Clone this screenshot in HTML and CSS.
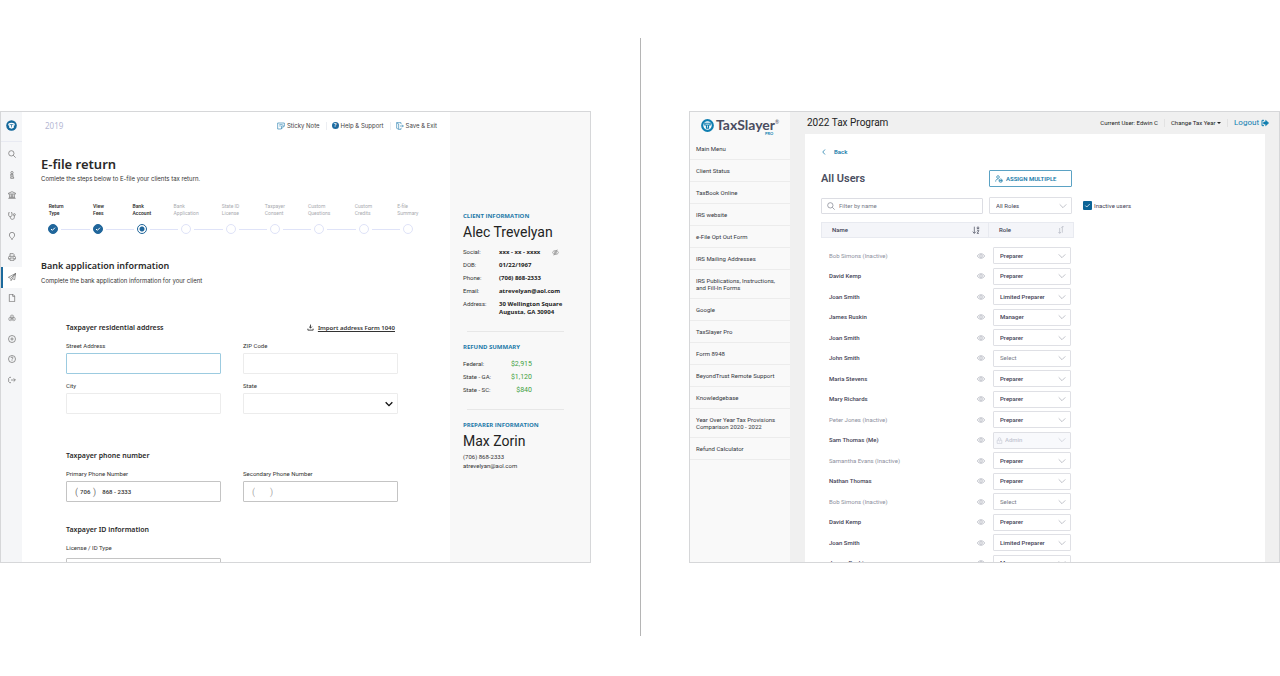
FILE: index.html
```html
<!DOCTYPE html>
<html lang="en">
<head>
<meta charset="utf-8">
<meta name="viewport" content="width=device-width, initial-scale=1">
<title>TaxSlayer screens</title>
<link rel="stylesheet" href="styles.css">
</head>
<body>
<svg class="sprite" aria-hidden="true">
  <symbol id="i-logo" viewBox="0 0 24 24"><circle cx="12" cy="12" r="11.500" fill="#14689b" stroke="none"/><path d="M5 8c4-3 10-3 14 0v4h-2v5l-5 2-5-2v-5H5z" fill="#fff" stroke="none"/><path d="M8 10h8M12 10v6" stroke="#14689b" stroke-width="1.500"/></symbol>
  <symbol id="i-brand" viewBox="0 0 24 24"><circle cx="12" cy="12" r="9.800" fill="#fff" stroke="#0f7eb0" stroke-width="4"/><path d="M6 7h12v5h-3v6H9v-6H6z" fill="#0f7eb0" stroke="none"/><path d="M8 9.500h8M12 12v4" stroke="#fff" stroke-width="1.500"/></symbol>
  <symbol id="i-search" viewBox="0 0 24 24"><circle cx="10" cy="10" r="8"/><path d="m16 16 7 7"/></symbol>
  <symbol id="i-info" viewBox="0 0 24 24"><circle cx="12" cy="5" r="3.500"/><path d="M8 10h7v9h2v3H8v-3h1v-6H8zM12 13v6"/></symbol>
  <symbol id="i-bank" viewBox="0 0 24 24"><path d="M1 7 12 2l11 5v2H1zM1 22h22M5 10v9M10 10v9M14 10v9M19 10v9M3 19h18"/></symbol>
  <symbol id="i-steth" viewBox="0 0 24 24"><path d="M5 2H2v7c0 3 2 5 5 5s5-2 5-5V2H9M7 14v2c0 8 12 8 12 0v-5"/><circle cx="19" cy="8" r="3"/></symbol>
  <symbol id="i-pin" viewBox="0 0 24 24"><path d="M12 23c-1-5-8-8-8-14a8 8 0 0 1 16 0c0 6-7 9-8 14z"/></symbol>
  <symbol id="i-print" viewBox="0 0 24 24"><path d="M6 10V2h10l2 2v6M6 18H1v-6l2-2h18l2 2v6h-5M6 15h12v7H6z"/></symbol>
  <symbol id="i-plane" viewBox="0 0 24 24"><path d="M23 1 1 13l7 3L23 1l-3 19-7-3-4 6v-6M23 1 13 17"/></symbol>
  <symbol id="i-file" viewBox="0 0 24 24"><path d="M4 1h11l5 5v17H4zM14 1v6h6"/></symbol>
  <symbol id="i-coins" viewBox="0 0 24 24"><g stroke-width="1.500"><circle cx="12" cy="8" r="5"/><circle cx="7" cy="15" r="5"/><circle cx="17" cy="15" r="5"/><path d="M12 5v6M7 13v5M17 13v5"/></g></symbol>
  <symbol id="i-plus" viewBox="0 0 24 24"><circle cx="12" cy="12" r="10.500"/><path d="M12 7v10M7 12h10"/></symbol>
  <symbol id="i-help" viewBox="0 0 24 24"><circle cx="12" cy="12" r="10.500"/><path d="M9 9c0-4 6-4 6 0 0 2-3 2-3 5M12 16v2"/></symbol>
  <symbol id="i-exit" viewBox="0 0 24 24"><path d="M9 4H5L2 7v10l3 3h4M9 12h13M17 7l5 5-5 5"/></symbol>
  <symbol id="i-note" viewBox="0 0 24 24"><path d="M22 12V3H2v18h11l9-9h-8l-1 9M7 8h10M7 12h4"/></symbol>
  <symbol id="i-save" viewBox="0 0 24 24"><path d="M15 6V2H2v17l6 3h7v-4M2 2l6 4v16M12 12h10M18 8l4 4-4 4"/></symbol>
  <symbol id="i-check" viewBox="0 0 24 24"><path d="m6 12 4 4 8-8"/></symbol>
  <symbol id="i-down" viewBox="0 0 24 24"><path d="M12 2v12M7 9l5 5 5-5M3 16v5h18v-5" stroke-width="3"/></symbol>
  <symbol id="i-chev" viewBox="0 0 24 24"><path d="m2 7 10 10L22 7"/></symbol>
  <symbol id="i-left" viewBox="0 0 24 24"><path d="M16 2 7 12l9 10"/></symbol>
  <symbol id="i-eye" viewBox="0 0 24 24"><path d="M1 12c5-9 17-9 22 0-5 9-17 9-22 0z"/><circle cx="12" cy="12" r="4"/></symbol>
  <symbol id="i-eyeoff" viewBox="0 0 24 24"><path d="M1 12c5-9 17-9 22 0-5 9-17 9-22 0zM6 22 18 2"/><circle cx="12" cy="12" r="4"/></symbol>
  <symbol id="i-users" viewBox="0 0 24 24"><circle cx="9" cy="6" r="4"/><path d="M2 20c0-6 3-8 8-8"/><circle cx="17" cy="17" r="5"/><path d="M15 15v4M19 15v4M13 17h9"/></symbol>
  <symbol id="i-az" viewBox="0 0 24 24"><path d="M7 2v20M2 17l5 5 5-5M16 10V4l2-2 2 2v6M16 7h4M15 14h6l-6 8h6"/></symbol>
  <symbol id="i-sort" viewBox="0 0 24 24"><path d="M8 6v16M4 18l4 4 4-4M16 20V2h4M16 2l-3 3"/></symbol>
  <symbol id="i-lock" viewBox="0 0 24 24"><path d="M4 11h16v11H4zM8 11V6c0-5 8-5 8 0v5M12 15v3"/></symbol>
  <symbol id="i-logout" viewBox="0 0 24 24"><path d="M9 4H3v16h6" stroke-width="3"/><path d="M8 9h6V4l9 8-9 8v-5H8z" fill="currentColor"/></symbol>
</svg>

<main class="compare">
  <section class="screen efile" aria-label="E-file return">
    <nav class="rail" aria-label="Sections">
      <a class="rail-logo" href="#" aria-label="Home"><svg class="icon-l"><use href="#i-logo"/></svg></a>
      <div class="rail-list">
        <a href="#" aria-label="Search"><svg class="icon"><use href="#i-search"/></svg></a>
        <a href="#" aria-label="Information"><svg class="icon"><use href="#i-info"/></svg></a>
        <a href="#" aria-label="Bank"><svg class="icon"><use href="#i-bank"/></svg></a>
        <a href="#" aria-label="Health"><svg class="icon"><use href="#i-steth"/></svg></a>
        <a href="#" aria-label="Location"><svg class="icon"><use href="#i-pin"/></svg></a>
        <a href="#" aria-label="Print"><svg class="icon"><use href="#i-print"/></svg></a>
        <a class="active" href="#" aria-label="E-file"><svg class="icon"><use href="#i-plane"/></svg></a>
        <a href="#" aria-label="Documents"><svg class="icon"><use href="#i-file"/></svg></a>
        <a href="#" aria-label="Payments"><svg class="icon"><use href="#i-coins"/></svg></a>
        <a href="#" aria-label="Add"><svg class="icon"><use href="#i-plus"/></svg></a>
        <a href="#" aria-label="Help"><svg class="icon"><use href="#i-help"/></svg></a>
        <a href="#" aria-label="Exit"><svg class="icon"><use href="#i-exit"/></svg></a>
      </div>
    </nav>

    <div class="efile-main">
      <header class="efile-top">
        <span class="year">2019</span>
        <div class="tools">
          <a href="#"><svg class="icon blue"><use href="#i-note"/></svg>Sticky Note</a>
          <a href="#"><span class="help-dot">?</span>Help &amp; Support</a>
          <a href="#"><svg class="icon blue"><use href="#i-save"/></svg>Save &amp; Exit</a>
        </div>
      </header>

      <h1>E-file return</h1>
      <p class="lead">Comlete the steps below to E-file your clients tax return.</p>

      <ol class="steps">
        <li class="done"><span class="label">Return<br>Type</span><span class="track"><span class="dot"><svg><use href="#i-check"/></svg></span></span></li>
        <li class="done"><span class="label">View<br>Fees</span><span class="track"><span class="dot"><svg><use href="#i-check"/></svg></span></span></li>
        <li class="current"><span class="label">Bank<br>Account</span><span class="track"><span class="dot"></span></span></li>
        <li><span class="label">Bank<br>Application</span><span class="track"><span class="dot"></span></span></li>
        <li><span class="label">State ID<br>License</span><span class="track"><span class="dot"></span></span></li>
        <li><span class="label">Taxpayer<br>Consent</span><span class="track"><span class="dot"></span></span></li>
        <li><span class="label">Custom<br>Questions</span><span class="track"><span class="dot"></span></span></li>
        <li><span class="label">Custom<br>Credits</span><span class="track"><span class="dot"></span></span></li>
        <li><span class="label">E-file<br>Summary</span><span class="track"><span class="dot"></span></span></li>
      </ol>

      <h2>Bank application information</h2>
      <p class="lead lead-2">Complete the bank application information for your client</p>

      <form class="form">
        <div class="form-head">
          <h3>Taxpayer residential address</h3>
          <a class="import" href="#"><svg class="icon"><use href="#i-down"/></svg><span>Import address Form 1040</span></a>
        </div>
        <div class="fields">
          <div class="field"><label for="street">Street Address</label><input id="street" class="focus" type="text"></div>
          <div class="field"><label for="zip">ZIP Code</label><input id="zip" type="text"></div>
          <div class="field"><label for="city">City</label><input id="city" type="text"></div>
          <div class="field"><label for="state">State</label>
            <div class="pick"><select id="state"><option></option></select><svg class="chev bold"><use href="#i-chev"/></svg></div></div>
        </div>
        <h3 class="phone-title">Taxpayer phone number</h3>
        <div class="fields strong">
          <div class="field"><label for="phone1">Primary Phone Number</label>
            <div class="phone"><span>(</span><input id="phone1" class="area" type="text" value="706"><span>)</span><input type="text" aria-label="Primary number" value="868 - 2333"></div></div>
          <div class="field"><label for="phone2">Secondary Phone Number</label>
            <div class="phone empty"><span>(</span><input id="phone2" class="area" type="text"><span>)</span><input type="text" aria-label="Secondary number"></div></div>
        </div>
        <h3 class="id-title">Taxpayer ID information</h3>
        <div class="fields strong roomy">
          <div class="field"><label for="idtype">License / ID Type</label><input id="idtype" type="text"></div>
        </div>
      </form>
    </div>

    <aside class="client">
      <h4>CLIENT INFORMATION</h4>
      <p class="person">Alec Trevelyan</p>
      <dl class="facts">
        <dt>Social:</dt><dd class="split">xxx - xx - xxxx <svg class="icon-s"><use href="#i-eyeoff"/></svg></dd>
        <dt>DOB:</dt><dd>01/22/1967</dd>
        <dt>Phone:</dt><dd>(706) 868-2333</dd>
        <dt>Email:</dt><dd>atrevelyan@aol.com</dd>
        <dt>Address:</dt><dd>30 Wellington Square<br>Augusta, GA 30904</dd>
      </dl>
      <hr>
      <h4>REFUND SUMMARY</h4>
      <dl class="facts refunds">
        <dt>Federal:</dt><dd>$2,915</dd>
        <dt>State - GA:</dt><dd>$1,120</dd>
        <dt>State - SC:</dt><dd>$840</dd>
      </dl>
      <hr>
      <h4>PREPARER INFORMATION</h4>
      <p class="person">Max Zorin</p>
      <p class="contact">(706) 868-2333<br>atrevelyan@aol.com</p>
    </aside>
  </section>

  <div class="divider"></div>

  <section class="screen admin" aria-label="Tax program users">
    <nav class="menu" aria-label="Main">
      <a class="brand" href="#"><svg><use href="#i-brand"/></svg><span class="brand-name">TaxSlayer<sup>®</sup><small>PRO</small></span></a>
      <a href="#">Main Menu</a>
      <a href="#">Client Status</a>
      <a href="#">TaxBook Online</a>
      <a href="#">IRS website</a>
      <a href="#">e-File Opt Out Form</a>
      <a href="#">IRS Mailing Addresses</a>
      <a href="#">IRS Publications, Instructions,<br>and Fill-In Forms</a>
      <a href="#">Google</a>
      <a href="#">TaxSlayer Pro</a>
      <a href="#">Form 8948</a>
      <a href="#">BeyondTrust Remote Support</a>
      <a href="#">Knowledgebase</a>
      <a href="#">Year Over Year Tax Provisions<br>Comparison 2020 - 2022</a>
      <a href="#">Refund Calculator</a>
    </nav>

    <div class="admin-main">
      <header class="admin-top">
        <h1>2022 Tax Program</h1>
        <div class="account">
          <span>Current User: Edwin C</span>
          <button type="button">Change Tax Year <i class="caret"></i></button>
          <a href="#">Logout <svg class="icon"><use href="#i-logout"/></svg></a>
        </div>
      </header>

      <div class="card">
        <a class="back" href="#"><svg><use href="#i-left"/></svg>Back</a>
        <div class="bar">
          <h2>All Users</h2>
          <button class="assign" type="button"><svg class="icon"><use href="#i-users"/></svg>ASSIGN MULTIPLE</button>
        </div>
        <div class="bar filters">
          <div class="search"><svg class="icon"><use href="#i-search"/></svg><input type="text" aria-label="Filter by name" placeholder="Filter by name"></div>
          <div class="pick"><select aria-label="Role filter"><option>All Roles</option></select><svg class="chev"><use href="#i-chev"/></svg></div>
          <label class="check"><input type="checkbox" checked><svg><use href="#i-check"/></svg><span>Inactive users</span></label>
        </div>

        <table class="users">
          <thead><tr>
            <th><span class="split">Name<svg class="icon"><use href="#i-az"/></svg></span></th>
            <th><span class="split">Role<svg class="icon pale"><use href="#i-sort"/></svg></span></th>
          </tr></thead>
          <tbody>
            <tr class="off"><td><span class="split">Bob Simons (Inactive)<svg class="icon"><use href="#i-eye"/></svg></span></td><td><div class="pick"><select aria-label="Role"><option>Preparer</option></select><svg class="chev"><use href="#i-chev"/></svg></div></td></tr>
            <tr><td><span class="split">David Kemp<svg class="icon"><use href="#i-eye"/></svg></span></td><td><div class="pick"><select aria-label="Role"><option>Preparer</option></select><svg class="chev"><use href="#i-chev"/></svg></div></td></tr>
            <tr><td><span class="split">Joan Smith<svg class="icon"><use href="#i-eye"/></svg></span></td><td><div class="pick"><select aria-label="Role"><option>Limited Preparer</option></select><svg class="chev"><use href="#i-chev"/></svg></div></td></tr>
            <tr><td><span class="split">James Ruskin<svg class="icon"><use href="#i-eye"/></svg></span></td><td><div class="pick"><select aria-label="Role"><option>Manager</option></select><svg class="chev"><use href="#i-chev"/></svg></div></td></tr>
            <tr><td><span class="split">Joan Smith<svg class="icon"><use href="#i-eye"/></svg></span></td><td><div class="pick"><select aria-label="Role"><option>Preparer</option></select><svg class="chev"><use href="#i-chev"/></svg></div></td></tr>
            <tr><td><span class="split">John Smith<svg class="icon"><use href="#i-eye"/></svg></span></td><td><div class="pick unset"><select aria-label="Role"><option>Select</option></select><svg class="chev"><use href="#i-chev"/></svg></div></td></tr>
            <tr><td><span class="split">Maria Stevens<svg class="icon"><use href="#i-eye"/></svg></span></td><td><div class="pick"><select aria-label="Role"><option>Preparer</option></select><svg class="chev"><use href="#i-chev"/></svg></div></td></tr>
            <tr><td><span class="split">Mary Richards<svg class="icon"><use href="#i-eye"/></svg></span></td><td><div class="pick"><select aria-label="Role"><option>Preparer</option></select><svg class="chev"><use href="#i-chev"/></svg></div></td></tr>
            <tr class="off"><td><span class="split">Peter Jones (Inactive)<svg class="icon"><use href="#i-eye"/></svg></span></td><td><div class="pick"><select aria-label="Role"><option>Preparer</option></select><svg class="chev"><use href="#i-chev"/></svg></div></td></tr>
            <tr><td><span class="split">Sam Thomas (Me)<svg class="icon"><use href="#i-eye"/></svg></span></td><td><div class="pick locked"><svg class="lock"><use href="#i-lock"/></svg><select aria-label="Role" disabled><option>Admin</option></select><svg class="chev"><use href="#i-chev"/></svg></div></td></tr>
            <tr class="off"><td><span class="split">Samantha Evans (Inactive)<svg class="icon"><use href="#i-eye"/></svg></span></td><td><div class="pick"><select aria-label="Role"><option>Preparer</option></select><svg class="chev"><use href="#i-chev"/></svg></div></td></tr>
            <tr><td><span class="split">Nathan Thomas<svg class="icon"><use href="#i-eye"/></svg></span></td><td><div class="pick"><select aria-label="Role"><option>Preparer</option></select><svg class="chev"><use href="#i-chev"/></svg></div></td></tr>
            <tr class="off"><td><span class="split">Bob Simons (Inactive)<svg class="icon"><use href="#i-eye"/></svg></span></td><td><div class="pick unset"><select aria-label="Role"><option>Select</option></select><svg class="chev"><use href="#i-chev"/></svg></div></td></tr>
            <tr><td><span class="split">David Kemp<svg class="icon"><use href="#i-eye"/></svg></span></td><td><div class="pick"><select aria-label="Role"><option>Preparer</option></select><svg class="chev"><use href="#i-chev"/></svg></div></td></tr>
            <tr><td><span class="split">Joan Smith<svg class="icon"><use href="#i-eye"/></svg></span></td><td><div class="pick"><select aria-label="Role"><option>Limited Preparer</option></select><svg class="chev"><use href="#i-chev"/></svg></div></td></tr>
            <tr><td><span class="split">James Ruskin<svg class="icon"><use href="#i-eye"/></svg></span></td><td><div class="pick"><select aria-label="Role"><option>Manager</option></select><svg class="chev"><use href="#i-chev"/></svg></div></td></tr>
          </tbody>
        </table>
      </div>
    </div>
  </section>
</main>
</body>
</html>
```

FILE: styles.css
```css
*, *::before, *::after { box-sizing: border-box; }

body {
  margin: 0;
  background: #fff;
  color: #333;
  font: 6px/8px Roboto, "Liberation Sans", sans-serif;
}

h1, h2, h3, h4, p, dl, dd, ol { margin: 0; padding: 0; }
a { color: inherit; text-decoration: none; }
input, select, button { font: inherit; color: inherit; margin: 0; }

.sprite { position: absolute; width: 0; height: 0; }
svg { fill: none; stroke: currentColor; stroke-width: 2; flex: none; }
.icon { width: 8px; height: 8px; }
.icon-s { width: 7px; height: 7px; color: #777; }
.icon-l { width: 11px; height: 11px; }
.blue { color: #3285b4; }
.split { display: flex; justify-content: space-between; align-items: center; }

/* Two screens side by side */
.compare {
  display: grid;
  grid-template-columns: minmax(0, 1fr) 2px minmax(0, 1fr);
  column-gap: 48px;
  align-items: center;
  min-height: 100vh;
  padding: 38px 0 40px;
}
.divider { align-self: stretch; border-right: 1px solid #b5b5b5; }
.screen {
  display: grid;
  aspect-ratio: 591 / 452;
  min-height: 0;
  overflow: hidden;
  border: 1px solid #d6d7d9;
}
.screen > * { min-height: 0; }

/* E-file screen */
.efile { grid-template-columns: 21px minmax(0, 1fr) 140px; }

.rail { background: #f5f6f8; color: #666; }
.rail-logo {
  display: flex;
  align-items: center;
  justify-content: center;
  height: 30px;
  padding-bottom: 2px;
  border-bottom: 1px solid #e8eaf2;
}
.rail-list { display: grid; grid-auto-rows: 1fr; height: 246px; margin-top: 2px; }
.rail-list a { display: flex; align-items: center; justify-content: center; }
.rail-list .active { background: #fff; box-shadow: inset 2px 0 #1c6a9d; }

.efile-main { padding: 0 9px 0 19px; }
.efile-top {
  display: flex;
  justify-content: space-between;
  align-items: center;
  height: 27px;
  padding: 0 4px 0 4px;
}
.year { color: #b4b7d3; font-size: 8px; font-family: "Noto Sans", sans-serif; }
.tools { display: flex; font-family: Inter, sans-serif; color: #444; }
.tools a { display: flex; align-items: center; gap: 2px; padding-left: 5px; }
.tools a:not(:last-child) { padding-right: 6px; border-right: 1px solid #eceef2; }
.help-dot {
  width: 7px;
  height: 7px;
  border-radius: 50%;
  background: #1f6a9e;
  color: #fff;
  font-weight: 700;
  font-size: 5px;
  line-height: 7px;
  text-align: center;
}

.efile h1, .efile h2, .efile h3 { font-family: "Noto Sans", "Open Sans", sans-serif; font-weight: 600; color: #2a2a2a; }
.efile h1 { margin-top: 16px; font-size: 13px; line-height: 18px; }
.efile h2 { margin-top: 25px; font-size: 9px; line-height: 14px; }
.efile h3 { font-size: 7px; line-height: 12px; }
.lead { margin-top: 2px; font-family: Inter, sans-serif; }
.lead-2 { margin-top: 4px; }

.steps {
  display: grid;
  grid-template-columns: repeat(9, 1fr);
  margin: 20px 11px 0 -10px;
  list-style: none;
  color: #a9abb0;
  font-size: 5px;
  line-height: 7px;
}
.steps li { display: grid; justify-items: center; row-gap: 7px; }
.steps .done, .steps .current { color: #333; font-weight: 600; }
.done .label { width: 9px; white-space: nowrap; }
.track { display: flex; align-items: center; justify-self: stretch; gap: 3px; }
.track::before, .track::after { content: ""; flex: 1; height: 1px; background: #dfe3f8; }
.steps li:first-child .track::before, .steps li:last-child .track::after { visibility: hidden; }
.dot { display: grid; width: 10px; height: 10px; border: 1px solid #dfe3f8; border-radius: 50%; }
.dot svg { width: 8px; height: 8px; color: #fff; stroke-width: 3; }
.done .dot { background: #20669b; border-color: #20669b; }
.current .dot { border-color: #20669b; background: radial-gradient(circle, #20669b 2px, #fff 3px); }

.form { margin: 37px 43px 0 25px; }
.form-head { display: flex; justify-content: space-between; align-items: center; padding-right: 3px; }
.import { display: flex; gap: 4px; font-family: "Noto Sans", sans-serif; font-weight: 600; text-decoration: underline; }
.import .icon { width: 7px; height: 7px; }
.fields { display: grid; grid-template-columns: 1fr 1fr; gap: 8px 22px; margin-top: 8px; }
.field { display: grid; row-gap: 3px; }
.roomy .field { row-gap: 6px; }
.form input, .form select, .phone {
  width: 100%;
  height: 21px;
  padding: 0 6px;
  border: 1px solid #ececec;
  border-radius: 1px;
  background: #fff;
}
.form .focus { border-color: #9ccbe0; }
.form .strong input, .form .phone { border-color: #c4c4c4; }
.phone-title { margin-top: 36px; }
.id-title { margin-top: 22px; }
.form .phone { display: flex; align-items: center; padding: 0 8px; }
.form .phone input { height: 12px; padding: 0 6px; border: 0; flex: 1; min-width: 0; font-weight: 500; }
.form .phone .area { flex: none; width: 15px; padding: 0 2px; }
.phone span { font-size: 9px; color: #777; }
.phone.empty span { color: #aaa; }

/* Select with a drawn chevron in the same cell */
.pick { display: grid; align-items: center; }
.pick > * { grid-area: 1 / 1; }
.pick select { appearance: none; width: 100%; border-radius: 1px; background: #fff; opacity: 1; }
.chev { width: 8px; height: 8px; justify-self: end; margin-right: 5px; pointer-events: none; color: #a2a4af; }
.chev.bold { color: #111; stroke-width: 4; }

.client { padding: 100px 26px 0 13px; background: #f8f8f8; }
.client h4 { color: #2279a8; font: 700 6px/8px "Open Sans", sans-serif; }
.person { margin-top: 3px; font-size: 14px; line-height: 18px; color: #222; }
.facts { display: grid; grid-template-columns: 36px 1fr; row-gap: 5px; margin-top: 7px; }
.facts dd { font-family: "Open Sans", sans-serif; font-weight: 700; white-space: nowrap; color: #222; }
.facts dd.split { padding-right: 5px; }
.client hr { margin: 15px 0 11px 4px; border: 0; border-top: 1px solid #e7e7e7; }
.facts.refunds { grid-template-columns: 36px 33px; margin-top: 9px; }
.refunds dd { text-align: right; font-family: inherit; font-weight: 400; font-size: 7px; color: #3fa142; }
.contact { margin-top: 2px; line-height: 9px; }

/* Admin screen */
.admin { grid-template-columns: 100px minmax(0, 1fr); background: #f0f0f0; color: #33363d; }
.menu { background: #f9f9f9; }
.menu a { display: block; padding: 7px 6px; border-bottom: 1px solid #ececec; line-height: 7px; white-space: nowrap; }
.menu .brand { display: flex; align-items: center; gap: 2px; height: 26px; padding: 0 0 0 11px; border: 0; }
.brand svg { width: 13px; height: 13px; }
.brand-name { position: relative; font: 700 14px/16px Lato, sans-serif; color: #4a4d61; }
.brand sup { font-size: 5px; line-height: 5px; vertical-align: 6px; font-weight: 400; }
.brand small { position: absolute; right: 6px; bottom: -3px; font-size: 4px; line-height: 5px; color: #0f7eb0; }

.admin-main { display: flex; flex-direction: column; padding: 0 14px 0 15px; }
.admin-top { display: flex; justify-content: space-between; align-items: center; height: 22px; flex: none; padding: 0 0 1px 2px; }
.admin-top h1 { font-size: 10px; line-height: 14px; font-weight: 400; color: #222; }
.account { display: flex; align-items: center; margin-right: -4px; color: #222; }
.account > * + * { margin-left: 6px; padding-left: 6px; border-left: 1px solid #e2e2e2; }
.account button { padding: 0 0 0 6px; border-width: 0 0 0 1px; background: none; }
.caret { display: inline-block; vertical-align: 1px; border: 2px solid transparent; border-top-color: #222; border-bottom: 0; }
.account a { display: flex; align-items: center; gap: 2px; font-size: 8px; color: #0f7eb0; }

.card { flex: 1; min-height: 0; padding: 14px 16px 0; background: #fff; color: #3f4254; }
.back { display: flex; align-items: center; gap: 7px; color: #1579a8; font-weight: 600; }
.back svg { width: 6px; height: 6px; stroke-width: 3; }
.bar { display: grid; grid-template-columns: 162px 83px auto; column-gap: 6px; align-items: center; }
.back + .bar { margin-top: 14px; }
.bar h2 { font-size: 11px; line-height: 14px; font-weight: 600; color: #4a4d60; }
.assign {
  display: flex;
  align-items: center;
  gap: 3px;
  height: 17px;
  padding: 0 5px;
  border: 1px solid #5ba2c4;
  border-radius: 1px;
  background: #fff;
  color: #1579a8;
  font-weight: 600;
}
.filters { margin-top: 10px; }
.search { display: flex; align-items: center; gap: 4px; height: 16px; padding-left: 5px; border: 1px solid #dcdde3; border-radius: 1px; color: #777a88; }
.search input { flex: 1; min-width: 0; padding: 0; border: 0; outline: 0; background: none; }
.search input::placeholder { color: #777a88; opacity: 1; }
.card .pick select { height: 17px; padding: 0 6px; border: 1px solid #dfe0e5; }
.check { display: grid; grid-template-columns: 9px auto; column-gap: 2px; align-items: center; justify-content: start; padding-left: 5px; }
.check input { appearance: none; grid-area: 1 / 1; width: 9px; height: 9px; border-radius: 1px; background: #0c6497; }
.check svg { grid-area: 1 / 1; width: 9px; height: 9px; color: #fff; z-index: 1; }

.users { width: 253px; margin-top: 8px; border-collapse: separate; border-spacing: 0; table-layout: fixed; }
.users th, .users td { padding: 0; text-align: left; }
.users th { height: 16px; padding: 0 8px 0 10px; background: #f4f5f9; border: 1px solid #e8eaf0; font-weight: 500; }
.users th:first-child { width: 167px; border-right: 0; }
.users thead::after { content: ""; display: block; height: 7px; }
.users tbody tr { height: 21px; }
.users tbody tr:nth-child(even) { height: 20px; }
.users td:first-child { padding: 0 3px 0 8px; font-weight: 500; }
.users td:last-child { padding: 0 3px 0 5px; }
.users td .icon { color: #a5a8b4; }
.users .off td:first-child { color: #8d909e; font-weight: 400; }
.users td .pick { font-weight: 500; }
.users .pick.unset { font-weight: 400; }
.pick.unset select { color: #777a88; }
.pale { color: #b0b3c0; }
.card .locked select { padding-left: 11px; background: #f8f9fc; color: #c3c6d2; }
.locked .lock { z-index: 1; width: 7px; height: 7px; margin-left: 3px; color: #c3c6d2; }
.locked .chev { color: #c3c6d2; }
```
